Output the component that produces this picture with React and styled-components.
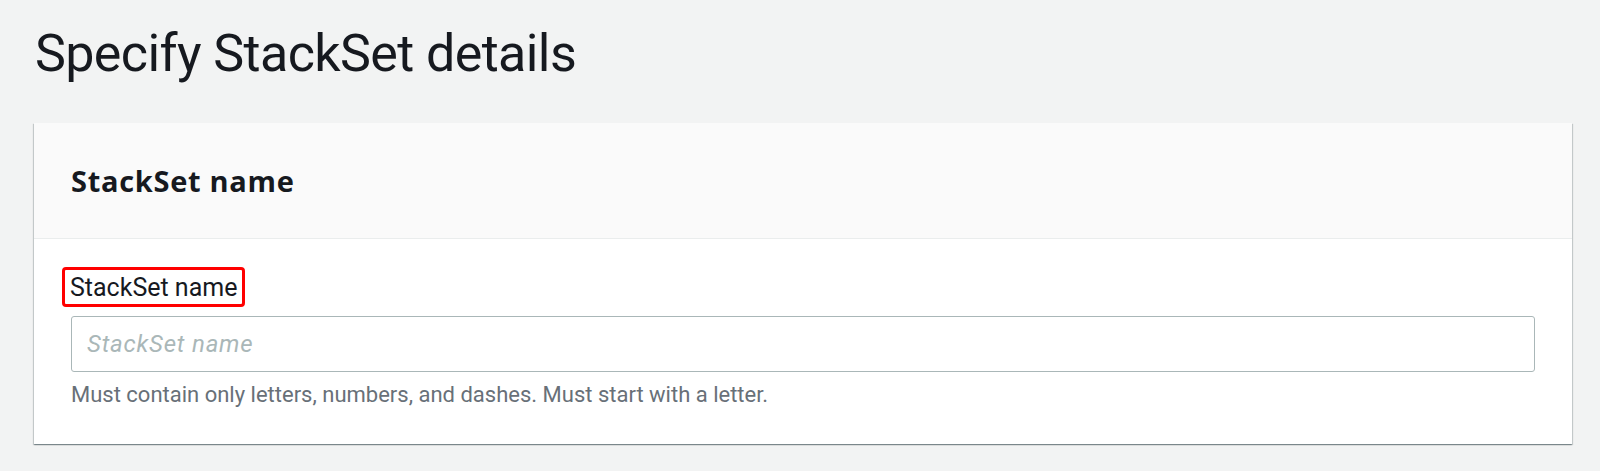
import React from "react";
import styled, { createGlobalStyle } from "styled-components";

const Global = createGlobalStyle`
  html, body { margin: 0; padding: 0; background: #f2f3f3; }
  body { font-family: Roboto, "Noto Sans", Arial, sans-serif; color: #16191f; }
  * { box-sizing: border-box; }
`;

const Page = styled.div`
  width: 1600px;
  height: 471px;
  padding: 24px 28px 0 34px;
  background: #f2f3f3;
`;

const Title = styled.h1`
  margin: 0 0 0 1px;
  font-size: 52px;
  line-height: 60px;
  font-weight: 400;
  letter-spacing: -0.6px;
  color: #16191f;
`;

const Card = styled.section`
  margin-top: 39px;
  width: 1538px;
  background: #fff;
  box-shadow: 0 1px 1px 0 rgba(0, 28, 36, 0.3), 1px 1px 1px 0 rgba(0, 28, 36, 0.15),
    -1px 1px 1px 0 rgba(0, 28, 36, 0.15);
`;

const CardHeader = styled.header`
  height: 116px;
  background: #fafafa;
  border-bottom: 1px solid #eaeded;
  padding: 0 37px;
  display: flex;
  align-items: center;
`;

const CardTitle = styled.h2`
  margin: 0;
  font-family: "Open Sans", "Noto Sans", Arial, sans-serif;
  font-size: 29px;
  font-weight: 700;
  letter-spacing: 0.7px;
  color: #16191f;
`;

const CardBody = styled.div`
  padding: 28px 37px 35px 37px;
  display: flex;
  flex-direction: column;
`;

const Label = styled.label`
  align-self: flex-start;
  margin-left: -9px;
  padding: 4px 5px 2px 5px;
  border: 3px solid #f00;
  border-radius: 4px;
  font-size: 25px;
  line-height: 28px;
  color: #16191f;
`;

const Input = styled.input`
  margin-top: 9px;
  width: 100%;
  height: 56px;
  border: 1px solid #aab7b8;
  border-radius: 3px;
  padding: 0 15px;
  font-family: Roboto, "Noto Sans", Arial, sans-serif;
  font-size: 24px;
  color: #16191f;
  background: #fff;
  outline: none;
  &::placeholder {
    color: #aab7b8;
    font-style: italic;
    letter-spacing: 0.8px;
  }
`;

const Hint = styled.p`
  margin: 9px 0 0 0;
  font-size: 22px;
  line-height: 28px;
  color: #687078;
`;

export default function App() {
  return (
    <>
      <Global />
      <Page>
        <Title>Specify StackSet details</Title>
        <Card>
          <CardHeader>
            <CardTitle>StackSet name</CardTitle>
          </CardHeader>
          <CardBody>
            <Label>StackSet name</Label>
            <Input placeholder="StackSet name" />
            <Hint>Must contain only letters, numbers, and dashes. Must start with a letter.</Hint>
          </CardBody>
        </Card>
      </Page>
    </>
  );
}
